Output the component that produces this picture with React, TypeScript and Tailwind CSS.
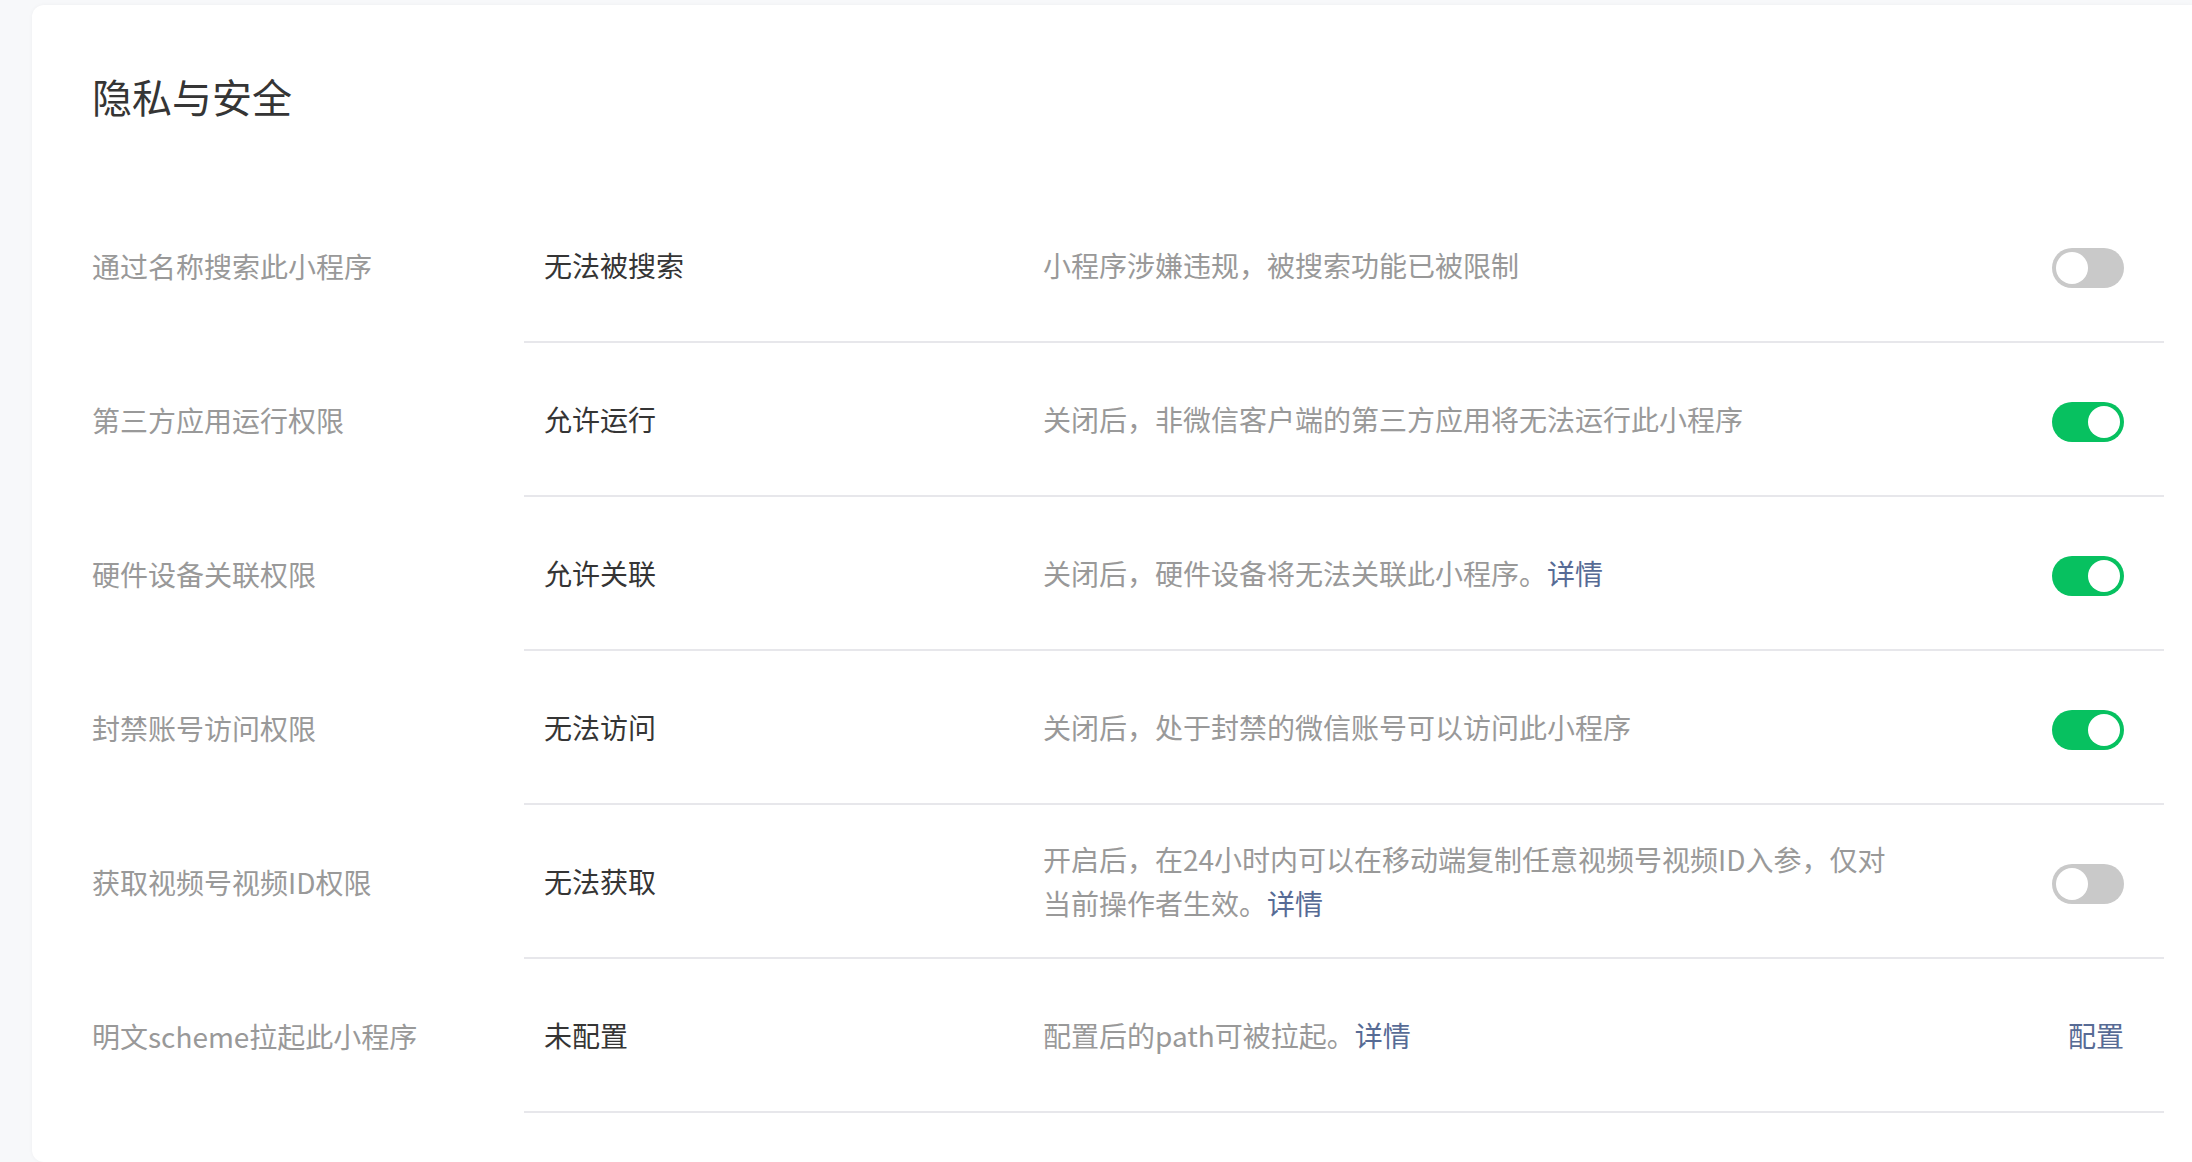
const FONT = "font-['PingFang_SC','Noto_Sans_CJK_SC','Noto_Sans',sans-serif]";

interface Row {
  label: string;
  value: string;
  desc: string;
  link?: boolean;
  action: "on" | "off" | "config";
}

const rows: Row[] = [
  { label: "通过名称搜索此小程序", value: "无法被搜索", desc: "小程序涉嫌违规，被搜索功能已被限制", action: "off" },
  { label: "第三方应用运行权限", value: "允许运行", desc: "关闭后，非微信客户端的第三方应用将无法运行此小程序", action: "on" },
  { label: "硬件设备关联权限", value: "允许关联", desc: "关闭后，硬件设备将无法关联此小程序。", link: true, action: "on" },
  { label: "封禁账号访问权限", value: "无法访问", desc: "关闭后，处于封禁的微信账号可以访问此小程序", action: "on" },
  {
    label: "获取视频号视频ID权限",
    value: "无法获取",
    desc: "开启后，在24小时内可以在移动端复制任意视频号视频ID入参，仅对当前操作者生效。",
    link: true,
    action: "off",
  },
  { label: "明文scheme拉起此小程序", value: "未配置", desc: "配置后的path可被拉起。", link: true, action: "config" },
];

function Switch({ on }: { on: boolean }) {
  return (
    <div
      className={
        on
          ? "mt-[6px] flex h-[40px] w-[72px] items-center justify-end rounded-full bg-[#07c160] px-[4px]"
          : "mt-[6px] flex h-[40px] w-[72px] items-center justify-start rounded-full bg-[#c9c9c9] px-[4px]"
      }
    >
      <div className="h-[32px] w-[32px] rounded-full bg-white" />
    </div>
  );
}

export default function App() {
  return (
    <div className={`min-h-screen bg-[#f7f8fa] pl-[32px] pt-[5px] ${FONT}`}>
      <div className="min-h-[1157px] rounded-l-[12px] bg-white pl-[60px] pr-[28px] pt-[63px] shadow-[0_0_4px_rgba(0,0,0,0.04)]">
        {/* 标题 */}
        <h2 className="text-[40px] leading-[56px] text-[#353535]">隐私与安全</h2>

        <div className="mt-[65px]">
          {rows.map((r) => (
            <div key={r.label} className="flex h-[154px]">
              <div className="flex w-[432px] shrink-0 items-center text-[28px] text-[#999999]">
                {r.label}
              </div>
              <div className="flex flex-1 items-center border-b-2 border-[#e7e7eb]">
                <div className="w-[519px] shrink-0 pl-[20px] text-[28px] text-[#353535]">{r.value}</div>
                <p className="w-[860px] shrink-0 text-[28px] leading-[44px] text-[#999999]">
                  {r.desc}
                  {r.link && <span className="text-[#576b95]">详情</span>}
                </p>
                <div className="flex flex-1 justify-end pr-[40px]">
                  {r.action === "config" ? (
                    <span className="text-[28px] text-[#576b95]">配置</span>
                  ) : (
                    <Switch on={r.action === "on"} />
                  )}
                </div>
              </div>
            </div>
          ))}
        </div>
      </div>
    </div>
  );
}
